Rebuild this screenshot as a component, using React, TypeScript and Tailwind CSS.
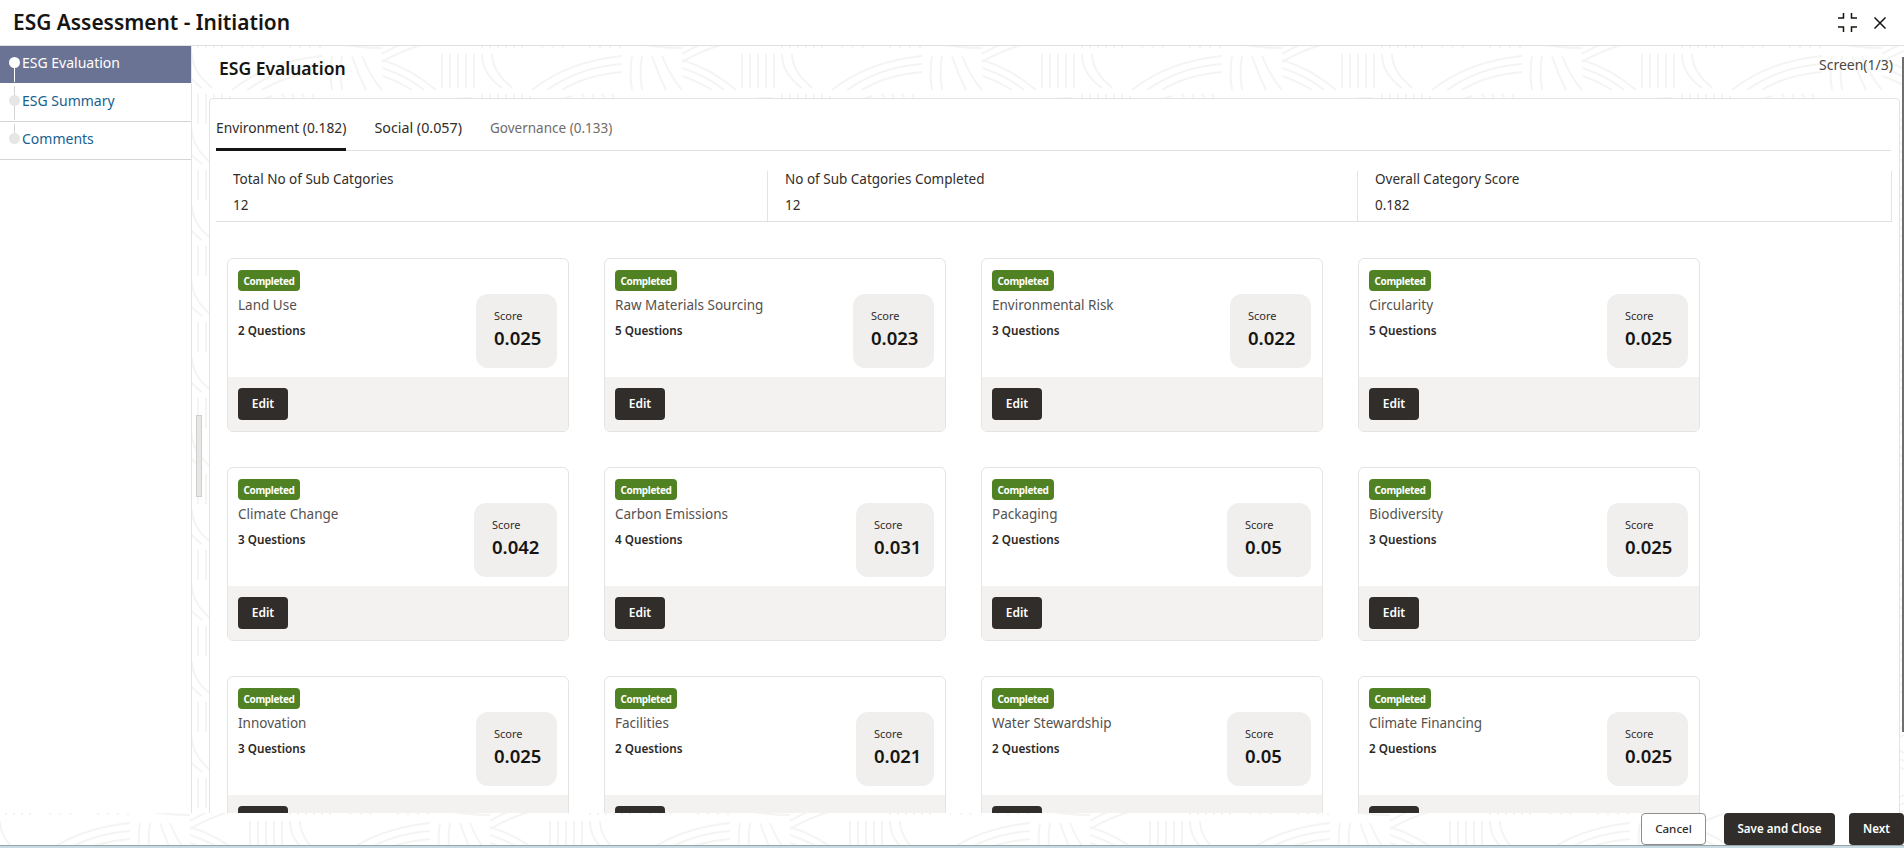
const font = "[font-family:'Noto_Sans','Open_Sans',sans-serif]";

type Cat = { name: string; q: number; score: string; w: string };

const rows: Cat[] = [
  { name: 'Land Use', q: 2, score: '0.025', w: 'w-[81px]' },
  { name: 'Raw Materials Sourcing', q: 5, score: '0.023', w: 'w-[81px]' },
  { name: 'Environmental Risk', q: 3, score: '0.022', w: 'w-[81px]' },
  { name: 'Circularity', q: 5, score: '0.025', w: 'w-[81px]' },
  { name: 'Climate Change', q: 3, score: '0.042', w: 'w-[83px]' },
  { name: 'Carbon Emissions', q: 4, score: '0.031', w: 'w-[78px]' },
  { name: 'Packaging', q: 2, score: '0.05', w: 'w-[84px]' },
  { name: 'Biodiversity', q: 3, score: '0.025', w: 'w-[81px]' },
  { name: 'Innovation', q: 3, score: '0.025', w: 'w-[81px]' },
  { name: 'Facilities', q: 2, score: '0.021', w: 'w-[78px]' },
  { name: 'Water Stewardship', q: 2, score: '0.05', w: 'w-[84px]' },
  { name: 'Climate Financing', q: 2, score: '0.025', w: 'w-[81px]' },
];

const Waves = () => (
  <svg className="absolute inset-0 h-full w-full" aria-hidden="true">
    <defs>
      <pattern id="waves" width="300" height="76" patternUnits="userSpaceOnUse" patternTransform="translate(190 46)">
        <g fill="none" stroke="#f4f4f3" strokeWidth="2">
          <path d="M0 30c30-18 60-24 90-24M0 38c30-18 60-24 90-24M0 46c30-18 60-24 90-24" />
          <path d="M100 2v30M108 2v30M116 2v30M124 2v30M132 2v30M140 2v30M148 4v26" />
          <path d="M160 32c4-14 14-24 30-28M170 32c4-10 10-16 20-20M180 32c2-6 5-9 10-11" />
          <path d="M200 2c6 10 8 20 8 30M210 2c6 10 8 20 8 30M220 2c6 10 8 20 8 30M230 2c6 10 8 20 8 30" />
          <path d="M245 10c20 8 40 10 55 10M245 18c20 8 40 10 55 10M245 26c20 4 40 6 55 6" />
          <path d="M0 44c20 6 40 18 54 30M0 52c18 6 30 12 42 22M0 60c12 4 20 8 30 14" />
          <path d="M60 38v34M68 38v34M76 38v34M84 38v34M92 38v34M100 38c0 12 6 24 20 34M110 38c0 10 6 22 20 34" />
          <path d="M150 74c20-16 50-30 90-34M165 74c20-14 45-24 75-26M180 74c16-10 36-16 60-18" />
          <path d="M250 40c-2 12-2 22 0 34M260 40c-2 12-2 22 0 34M270 40c4 12 8 22 14 34M280 40c4 10 10 22 20 34" />
        </g>
      </pattern>
    </defs>
    <rect width="100%" height="100%" fill="url(#waves)" />
  </svg>
);

const Card = ({ c }: { c: Cat }) => (
  <div className="flex h-[174px] flex-col overflow-hidden rounded-md border border-[#e4e4e3] bg-white">
    <div className="flex h-[118px] justify-between pl-[10px] pr-[11px]">
      <div className="pt-[11px]">
        <span className="flex h-[21px] w-[62px] items-center justify-center rounded-[4px] bg-[#508223] pt-px text-[10px] font-bold tracking-[-0.35px] text-white">Completed</span>
        <div className="mt-[4px] text-[13.5px] leading-[20px] text-[#55514e]">{c.name}</div>
        <div className="mt-[7px] text-[11.7px] font-semibold leading-[16px] text-[#2b2826]">{c.q} Questions</div>
      </div>
      <div className={`${c.w} mt-[35px] h-[74px] rounded-[12px] bg-[#f0efed] pl-[18px] pt-[14px]`}>
        <div className="text-[11px] leading-[16px] text-[#312d2a]">Score</div>
        <div className="mt-[2px] text-[18.5px] font-semibold leading-[24px] text-[#161513]">{c.score}</div>
      </div>
    </div>
    <div className="flex-1 bg-[#f3f2f0] pl-[10px] pt-[11px]">
      <button className="h-[32px] w-[50px] rounded-[4px] bg-[#312d2a] text-[12px] font-semibold text-white">Edit</button>
    </div>
  </div>
);

const Stat = ({ label, value, cls }: { label: string; value: string; cls: string }) => (
  <div className={`${cls} h-[50px] border-r border-[#e4e4e3] pl-[17px] text-[13.5px] text-[#312d2a]`}>
    <div className="leading-[16px]">{label}</div>
    <div className="mt-[9px] leading-[18px]">{value}</div>
  </div>
);

const Step = ({ label, active, last }: { label: string; active?: boolean; last?: boolean }) => (
  <div className={`relative flex h-[38px] items-center border-b pb-[4px] pl-[22px] text-[14px] ${active ? 'border-white bg-[#6b7394] text-white' : 'border-[#d4d4d3] text-[#17618f]'}`}>
    <span className={`absolute left-[9px] top-[11px] h-[11px] w-[11px] rounded-full ${active ? 'bg-white' : 'bg-[#e6e6e5]'}`} />
    {!last && <span className={`absolute left-[14px] top-[22px] h-[14px] w-px ${active ? 'bg-white' : 'bg-[#d4d4d3]'}`} />}
    {!active && <span className="absolute left-[14px] top-[2px] h-[9px] w-px bg-[#d4d4d3]" />}
    {label}
  </div>
);

export default function App() {
  return (
    <div className={`${font} relative flex h-screen flex-col overflow-hidden bg-white`}>
      <header className="flex h-[46px] shrink-0 items-center justify-between border-b border-[#e0e0df] pl-[13px] pr-[18px]">
        <h1 className="text-[20.9px] font-semibold text-[#161513]">ESG Assessment - Initiation</h1>
        <div className="flex items-center gap-[17px]">
          <svg width="19" height="19" viewBox="0 0 19 19" fill="none" stroke="#161513" strokeWidth="1.5">
            <path d="M5.5 0v5H0M13.5 0v5H19M5.5 19v-5H0M13.5 19v-5H19" />
          </svg>
          <svg width="12" height="12" viewBox="0 0 12 12" fill="none" stroke="#161513" strokeWidth="1.5">
            <path d="M0.5 0.5l11 11M11.5 0.5l-11 11" />
          </svg>
        </div>
      </header>

      <div className="flex min-h-0 flex-1">
        <aside className="w-[192px] shrink-0 border-r border-[#dfe5ee] bg-white">
          <Step label="ESG Evaluation" active />
          <Step label="ESG Summary" />
          <Step label="Comments" last />
        </aside>

        <main className="relative min-w-0 flex-1 bg-white">
          <Waves />
          <div className="absolute left-[4px] top-[369px] h-[82px] w-[6px] border border-[#cfcfce] bg-[#e6e6e5]" />
          <div className="absolute right-0 top-[11px] h-[675px] w-[2px] bg-[#6f6f6f]" />
          <div className="relative flex h-[52px] items-start justify-between pl-[27px] pr-[11px]">
            <h2 className="pt-[10px] text-[17.5px] font-semibold leading-[24px] text-[#161513]">ESG Evaluation</h2>
            <span className="pt-[8px] text-[14px] leading-[22px] text-[#4a4744]">Screen(1/3)</span>
          </div>
          <section className="relative ml-[17px] mr-[4px] h-[1000px] rounded-t-[4px] border border-[#e4e4e3] bg-white">
            <div className="ml-[6px] mr-[8px] flex h-[52px] border-b border-[#e0e0df]">
              <div className="flex h-[52px] items-center border-b-[3px] border-[#161513] pt-[9px] text-[13.8px] text-[#312d2a]">Environment (0.182)</div>
              <div className="ml-[28px] flex h-[52px] items-center pt-[6px] text-[14.3px] text-[#312d2a]">Social (0.057)</div>
              <div className="ml-[28px] flex h-[52px] items-center pt-[6px] text-[13.5px] text-[#6f6c6a]">Governance (0.133)</div>
            </div>
            <div className="ml-[6px] mr-[7px] mt-[20px] flex h-[51px] border-b border-[#e0e0df]">
              <Stat cls="w-[552px]" label="Total No of Sub Catgories" value="12" />
              <Stat cls="w-[590px]" label="No of Sub Catgories Completed" value="12" />
              <Stat cls="flex-1" label="Overall Category Score" value="0.182" />
            </div>
            <div className="ml-[17px] mt-[36px] grid w-[1473px] grid-cols-[342px_342px_342px_342px] gap-x-[35px] gap-y-[35px]">
              {rows.map((c) => (
                <Card key={c.name} c={c} />
              ))}
            </div>
          </section>
        </main>
      </div>

      <footer className="relative h-[35px] shrink-0 bg-white">
        <Waves />
        <div className="relative flex h-[32px] justify-end text-[11.6px] font-semibold">
          <button className="h-[32px] w-[65px] rounded-[4px] border border-[#8f8d8b] bg-white font-medium text-[#312d2a]">Cancel</button>
          <button className="ml-[18px] h-[32px] w-[111px] rounded-[4px] bg-[#312d2a] text-white">Save and Close</button>
          <button className="ml-[14px] h-[32px] w-[55px] rounded-[4px] bg-[#312d2a] text-white">Next</button>
        </div>
        <div className="relative h-[3px] border-t border-[#9aa5ab] bg-[#c9dbe2]" />
      </footer>
    </div>
  );
}
